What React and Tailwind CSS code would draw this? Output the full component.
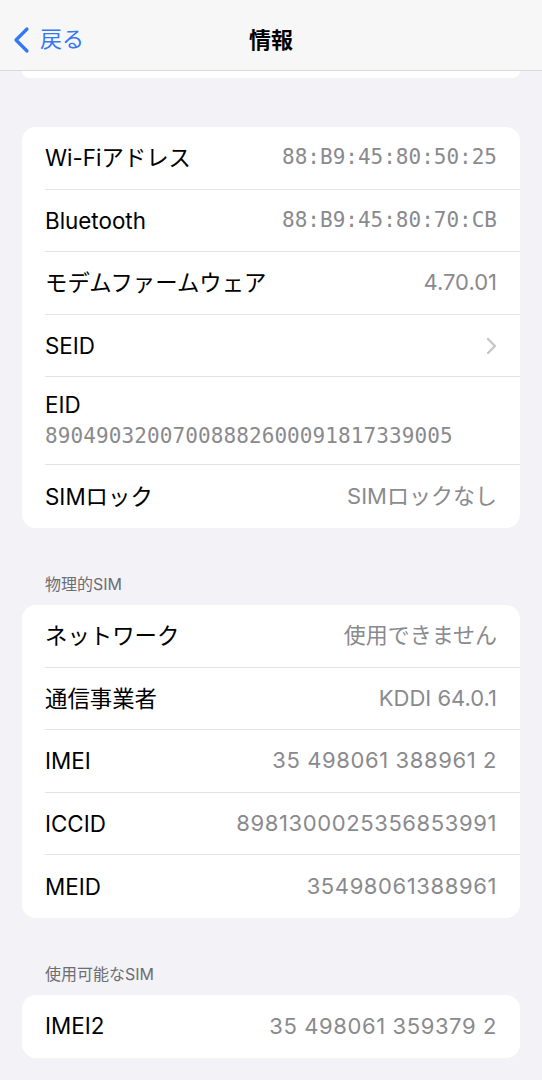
import React from "react";

const sans = { fontFamily: '"Inter", "Noto Sans CJK JP", sans-serif' };

function Chevron() {
  return (
    <svg width="11" height="18" viewBox="0 0 11 18" fill="none">
      <path d="M2 2l7 7-7 7" stroke="#c4c4c7" strokeWidth="2.2" strokeLinecap="round" strokeLinejoin="round" />
    </svg>
  );
}

// kind: "mono" = SF Mono style values, "num" = wide proportional digits
function Row({ label, value, kind, chevron, last }) {
  let valueClass = "text-[22px] text-[#8a8a8e]";
  if (kind === "mono") valueClass = "text-[21px] text-[#8a8a8e] font-['DejaVu_Sans_Mono',monospace]";
  if (kind === "num") valueClass = "text-[22px] text-[#8a8a8e] tracking-[0.6px]";

  return (
    <div className="pl-[23px] h-[62.6px]">
      <div
        className={`h-full flex items-center justify-between pr-[23px] ${
          last ? "" : "border-b border-[#e3e3e6]"
        }`}
      >
        <span className="text-[22.4px] text-black">{label}</span>
        {chevron ? <Chevron /> : <span className={valueClass}>{value}</span>}
      </div>
    </div>
  );
}

function Card({ children }) {
  return <div className="mx-[22px] bg-white rounded-[14px] overflow-hidden">{children}</div>;
}

function Header({ children }) {
  return (
    <div className="px-[45px] pt-[45px] pb-[10px] text-[16px] leading-[22px] text-[#6d6d72]">
      {children}
    </div>
  );
}

export default function App() {
  return (
    <div className="w-[542px] h-[1080px] overflow-hidden bg-[#f2f2f7]" style={sans}>
      {/* Nav bar */}
      <div className="h-[71px] pt-[10px] bg-[#f7f7f8] border-b border-[#d9d9dc] flex items-center relative">
        <div className="flex items-center pl-[12px] gap-[10px] text-[#3478f6]">
          <svg width="18" height="28" viewBox="0 0 18 28" fill="none">
            <path d="M15 3L4 14l11 11" stroke="#3478f6" strokeWidth="3.2" strokeLinecap="round" strokeLinejoin="round" />
          </svg>
          <span className="text-[22px] mt-[-2px]">戻る</span>
        </div>
        <div className="absolute left-0 right-0 top-[10px] bottom-0 flex items-center justify-center pointer-events-none">
          <span className="text-[22px] font-bold text-black">情報</span>
        </div>
      </div>

      {/* bottom of the card above */}
      <div className="mx-[22px] h-[7px] bg-white rounded-b-[14px]"></div>

      <div className="h-[49px]"></div>

      <Card>
        <Row label="Wi-Fiアドレス" value="88:B9:45:80:50:25" kind="mono" />
        <Row label="Bluetooth" value="88:B9:45:80:70:CB" kind="mono" />
        <Row label="モデムファームウェア" value="4.70.01" />
        <Row label="SEID" chevron />
        <div className="pl-[23px]">
          <div className="border-b border-[#e3e3e6] pr-[23px] pt-[14px] h-[88px]">
            <div className="text-[22.4px] leading-[28px] text-black">EID</div>
            <div className="text-[21px] leading-[34px] text-[#8a8a8e] font-['DejaVu_Sans_Mono',monospace] tracking-[0.1px]">
              89049032007008882600091817339005
            </div>
          </div>
        </div>
        <Row label="SIMロック" value="SIMロックなし" last />
      </Card>

      <Header>物理的SIM</Header>
      <Card>
        <Row label="ネットワーク" value="使用できません" />
        <Row label="通信事業者" value="KDDI 64.0.1" />
        <Row label="IMEI" value="35 498061 388961 2" kind="num" />
        <Row label="ICCID" value="8981300025356853991" kind="num" />
        <Row label="MEID" value="35498061388961" kind="num" last />
      </Card>

      <Header>使用可能なSIM</Header>
      <Card>
        <Row label="IMEI2" value="35 498061 359379 2" kind="num" last />
      </Card>
    </div>
  );
}
